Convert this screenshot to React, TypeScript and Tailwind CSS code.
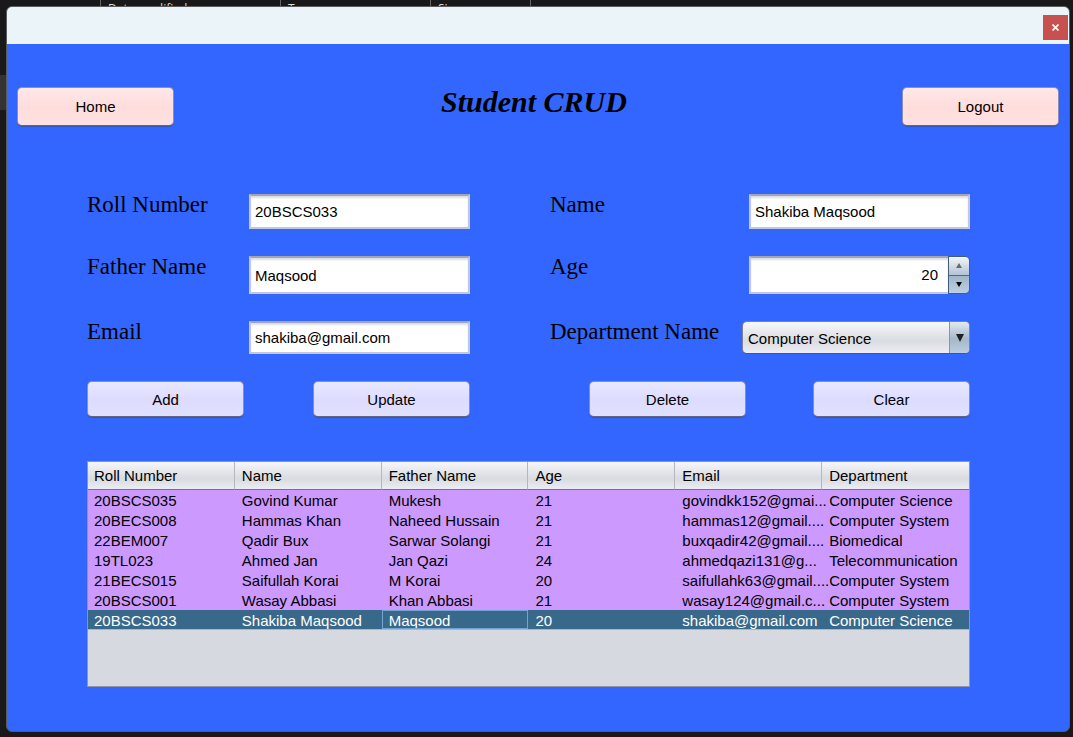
import { useState } from "react";
import type { ReactNode } from "react";

type Student = [string, string, string, number, string, string];

const students: Student[] = [
  ["20BSCS035", "Govind Kumar", "Mukesh", 21, "govindkk152@gmai...", "Computer Science"],
  ["20BECS008", "Hammas Khan", "Naheed Hussain", 21, "hammas12@gmail....", "Computer System"],
  ["22BEM007", "Qadir Bux", "Sarwar Solangi", 21, "buxqadir42@gmail....", "Biomedical"],
  ["19TL023", "Ahmed Jan", "Jan Qazi", 24, "ahmedqazi131@g...", "Telecommunication"],
  ["21BECS015", "Saifullah Korai", "M Korai", 20, "saifullahk63@gmail....", "Computer System"],
  ["20BSCS001", "Wasay Abbasi", "Khan Abbasi", 21, "wasay124@gmail.c...", "Computer System"],
  ["20BSCS033", "Shakiba Maqsood", "Maqsood", 20, "shakiba@gmail.com", "Computer Science"],
];

const columns = ["Roll Number", "Name", "Father Name", "Age", "Email", "Department"];

const inputClass =
  "min-w-0 flex-1 border-2 border-[#c3c7d6] border-t-[#a2a6b4] bg-white px-1 shadow-[inset_0_2px_2px_#dcdde1] outline-none";

function Button({ tone, children }: { tone: "pink" | "lilac"; children: ReactNode }) {
  const look =
    tone === "pink"
      ? "h-[39px] from-[#ffe8e8] via-[#ffdddd] to-[#ffe0e0]"
      : "h-9 from-[#e8e8ff] via-[#dddcff] to-[#e0e0ff]";
  return (
    <button
      type="button"
      className={`w-[157px] rounded-[5px] border border-[#8c8fb4] border-b-[#62657f] bg-linear-to-b pt-px shadow-[0_1px_1px_#3556b0] ${look}`}
    >
      {children}
    </button>
  );
}

function Field({ id, label, wide, children }: { id: string; label: string; wide?: boolean; children: ReactNode }) {
  return (
    <div className="flex min-w-0">
      <label
        htmlFor={id}
        className={`shrink-0 whitespace-nowrap font-['Liberation_Serif',serif] text-[23px] leading-[22px] ${
          wide ? "w-[199px]" : "w-[162px]"
        }`}
      >
        {label}
      </label>
      {children}
    </div>
  );
}

function DesktopHeader() {
  return (
    <div
      aria-hidden="true"
      className="flex h-1.5 overflow-hidden pl-[100px] font-['Open_Sans',sans-serif] text-[12px] leading-[12px] text-[#dddddd]"
    >
      <span className="h-4 w-[180px] shrink-0 border-l border-[#666666] pl-[7px] pt-[3px]">Date modified</span>
      <span className="h-4 w-[150px] shrink-0 border-l border-[#666666] pl-[7px] pt-[3px]">Type</span>
      <span className="h-4 w-[101px] shrink-0 border-x border-[#666666] pl-[7px] pt-[3px]">Size</span>
    </div>
  );
}

export default function App() {
  const [roll, setRoll] = useState("20BSCS033");
  const [name, setName] = useState("Shakiba Maqsood");
  const [father, setFather] = useState("Maqsood");
  const [age, setAge] = useState(20);
  const [email, setEmail] = useState("shakiba@gmail.com");
  const [department, setDepartment] = useState("Computer Science");
  const [selected, setSelected] = useState(6);

  return (
    <div className="relative flex min-h-screen flex-col bg-[#191919] pb-[5px] font-['Liberation_Sans',Arial,sans-serif] text-[15px] leading-5 text-black">
      <div className="absolute left-0 top-[75px] h-[35px] w-1.5 bg-[#333333]" />
      <DesktopHeader />
      <div className="relative ml-1.5 mr-[3px] flex flex-1 flex-col overflow-hidden rounded-[6px] border border-[#5c5c5c] bg-[#3366ff]">
        <div className="flex h-[37px] items-start justify-end bg-[#ebf4f8] pr-px pt-2">
          <button type="button" aria-label="Close" className="flex size-[25px] items-center justify-center bg-[#c75050]">
            <svg width="7" height="7" viewBox="0 0 7 7" stroke="white" strokeWidth="1.6" fill="none">
              <path d="M.5.5l6 6M6.5.5l-6 6" />
            </svg>
          </button>
        </div>

        <header className="flex items-start justify-between px-2.5 pt-[43px]">
          <Button tone="pink">Home</Button>
          <h1 className="pr-2 font-['Liberation_Serif',serif] text-[30px] font-bold italic leading-[30px]">Student CRUD</h1>
          <Button tone="pink">Logout</Button>
        </header>

        <main className="pb-11 pl-20 pr-[99px] pt-[68px]">
          <form
            className="grid grid-cols-[minmax(0,383fr)_minmax(0,420fr)] gap-x-20 gap-y-[27px]"
            onSubmit={(e) => e.preventDefault()}
          >
            <Field id="roll" label="Roll Number">
              <input id="roll" className={`h-[35px] ${inputClass}`} value={roll} onChange={(e) => setRoll(e.target.value)} />
            </Field>
            <Field id="name" label="Name" wide>
              <input id="name" className={`h-[35px] ${inputClass}`} value={name} onChange={(e) => setName(e.target.value)} />
            </Field>
            <Field id="father" label="Father Name">
              <input id="father" className={`h-[38px] ${inputClass}`} value={father} onChange={(e) => setFather(e.target.value)} />
            </Field>
            <Field id="age" label="Age" wide>
              <div className="flex h-[38px] min-w-0 flex-1">
                <input
                  id="age"
                  inputMode="numeric"
                  className={`border-r-0 pr-2.5! text-right ${inputClass}`}
                  value={age}
                  onChange={(e) => setAge(Number(e.target.value) || 0)}
                />
                <div className="flex w-[22px] shrink-0 flex-col overflow-hidden rounded-r-[5px] border border-[#40607a]">
                  <button
                    type="button"
                    aria-label="Increase age"
                    onClick={() => setAge(age + 1)}
                    className="flex flex-1 items-center justify-center border-b border-[#4f6b82] bg-linear-to-b from-[#f3f6f9] to-[#b3c3d4]"
                  >
                    <svg width="6" height="5" viewBox="0 0 6 5" fill="#6a6a6a"><path d="M3 0l3 5H0z" /></svg>
                  </button>
                  <button
                    type="button"
                    aria-label="Decrease age"
                    onClick={() => setAge(age - 1)}
                    className="flex flex-1 items-center justify-center bg-linear-to-b from-[#9fb5c9] to-[#bdd0e2]"
                  >
                    <svg width="6" height="5" viewBox="0 0 6 5" fill="black"><path d="M0 0h6L3 5z" /></svg>
                  </button>
                </div>
              </div>
            </Field>
            <Field id="email" label="Email">
              <input id="email" className={`h-[33px] ${inputClass}`} value={email} onChange={(e) => setEmail(e.target.value)} />
            </Field>
            <div className="flex min-w-0">
              <label
                htmlFor="department"
                className="w-48 shrink-0 whitespace-nowrap font-['Liberation_Serif',serif] text-[23px] leading-[22px]"
              >
                Department Name
              </label>
              <div className="relative h-[33px] min-w-0 flex-1 overflow-hidden rounded-[5px] border border-[#7b8299] border-b-[#4d566b]">
                <select
                  id="department"
                  value={department}
                  onChange={(e) => setDepartment(e.target.value)}
                  className="h-full w-full appearance-none bg-linear-to-b from-[#f7f8fa] via-[#d9dce1] via-60% to-[#eceef4] pl-[5px] pr-6 pt-0.5 outline-none"
                >
                  <option>Computer Science</option>
                  <option>Computer System</option>
                  <option>Biomedical</option>
                  <option>Telecommunication</option>
                </select>
                <span className="pointer-events-none absolute inset-y-0 right-0 flex w-5 items-center justify-center border-l border-[#8296aa] bg-linear-to-b from-[#e2eaf0] via-[#a4b8ca] via-55% to-[#bacee0]">
                  <svg width="8" height="8" viewBox="0 0 8 8" fill="#202020"><path d="M0 0h8L4 8z" /></svg>
                </span>
              </div>
            </div>
            <div className="flex justify-between">
              <Button tone="lilac">Add</Button>
              <Button tone="lilac">Update</Button>
            </div>
            <div className="flex justify-between pl-[39px]">
              <Button tone="lilac">Delete</Button>
              <Button tone="lilac">Clear</Button>
            </div>
          </form>

          <div className="mt-11 min-h-[226px] border border-[#8f94a6] bg-[#d6d9df]">
            <table className="w-full table-fixed border-separate border-spacing-0 border-b border-[#cc99ff] text-left">
              <thead>
                <tr className="h-7 bg-linear-to-b from-[#f6f7f9] via-[#d8dbe0] via-60% to-[#edeff5]">
                  {columns.map((c) => (
                    <th
                      key={c}
                      scope="col"
                      className="border-b border-r border-b-[#74757c] border-r-[#b4b7be] p-0 pl-[7px] font-normal first:pl-1.5 last:border-r-0"
                    >
                      {c}
                    </th>
                  ))}
                </tr>
              </thead>
              <tbody>
                {students.map((s, row) => (
                  <tr
                    key={s[0]}
                    onClick={() => setSelected(row)}
                    className={row === selected ? "bg-[#39698a] text-white" : "bg-[#cc99ff]"}
                  >
                    {s.map((value, col) => (
                      <td
                        key={col}
                        className={`whitespace-nowrap p-0 pl-[7px] first:pl-1.5 ${
                          row === selected ? "h-[19px] pt-0.5 leading-[17px]" : "h-5 pt-0.5 leading-[18px]"
                        } ${row === selected && col === 2 ? "outline -outline-offset-1 outline-[#73a4d1]" : ""}`}
                      >
                        {value}
                      </td>
                    ))}
                  </tr>
                ))}
              </tbody>
            </table>
          </div>
        </main>
      </div>
    </div>
  );
}
